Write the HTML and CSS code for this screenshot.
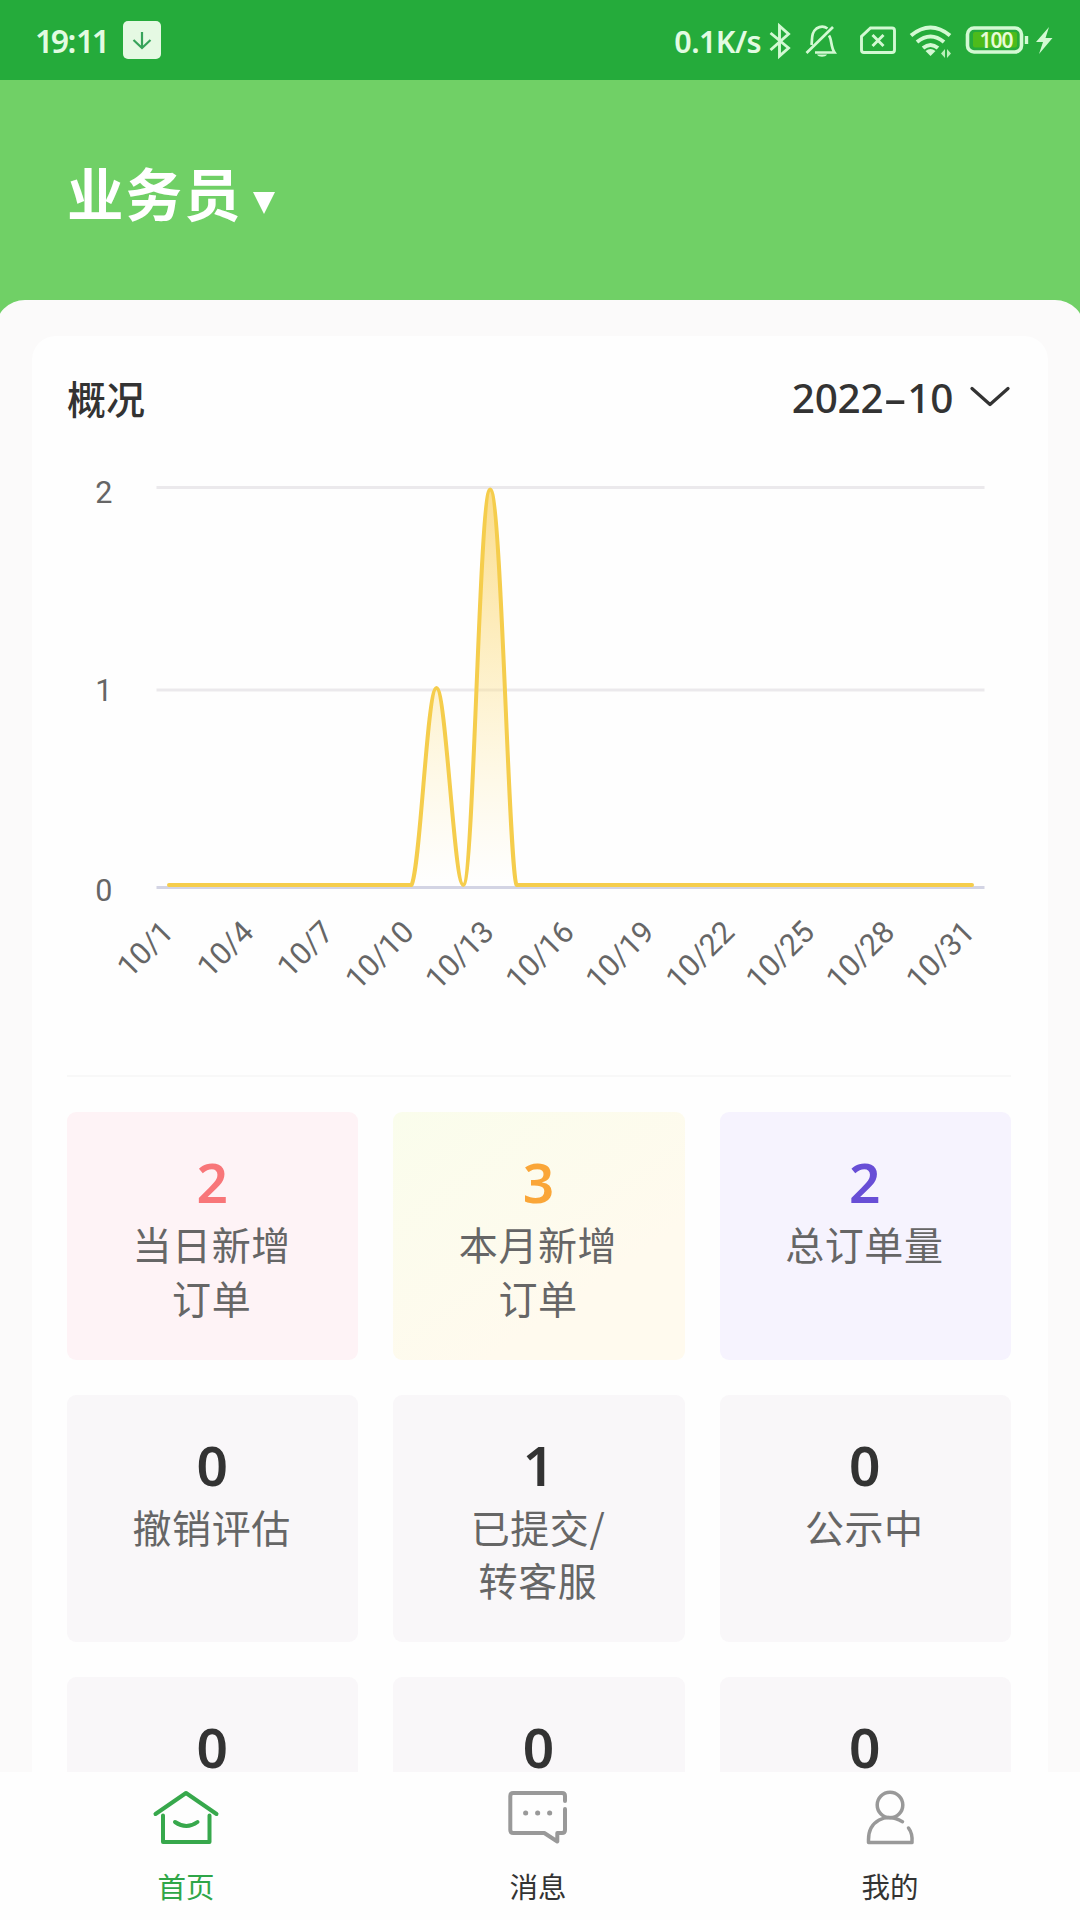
FILE: index.html
```html
<!DOCTYPE html>
<html lang="zh-CN">
<head>
<meta charset="utf-8">
<title>业务员</title>
<link rel="stylesheet" href="styles.css">
</head>
<body>
<div class="status">
  <span class="clock">19<span class="colon">:</span>11</span>
  <svg class="download" width="38" height="38" viewBox="0 0 38 38"><rect width="38" height="38" rx="5" fill="#e5f9e3"/><path d="M19 11v16M10.500 19l8.500 8 8.500-8" fill="none" stroke="#37a35a" stroke-width="2.200"/></svg>
  <span class="speed">0.1K/s</span>
  <svg class="indicators" width="290" height="40" viewBox="768 20 290 40" fill="none" stroke="#d3f9d3" stroke-width="2.900">
    <path d="M770.500 33l18 15-9 8V26l9 8-18 16"/>
    <path d="M829 35.500c3 4 1.500 11 5.500 17H815M811.500 45c1-7-.5-12 5-16.500 4-2.500 8-2.200 11 0M806.500 53L833 27" stroke-width="2.700"/>
    <path d="M817 54.500h10c-1.500 3-8.500 3-10 0z" fill="#d3f9d3" stroke="none"/>
    <path d="M870.500 28H892q2.500 0 2.500 2.500V50q0 2.500-2.500 2.500H864q-2.500 0-2.500-2.500V36.500zM872.500 35l11 11M883.500 35l-11 11"/>
    <path d="M911 35.500q19.500-16 39 0M917 42q13.500-11 27 0M923 48q7.500-6 15 0" stroke-width="4"/>
    <path d="M925.500 51q5-4 10 0l-5 5z" fill="#d3f9d3" stroke="none"/>
    <path d="M945 49v9l-4-4.500zM947 49v9l4-4.500z" fill="#b9efb9" stroke="none"/>
    <rect x="973" y="32" width="44" height="15.500" rx="2" fill="#4dbb1b" stroke="none"/>
    <rect x="967.500" y="28" width="54" height="24" rx="6.500" stroke-width="3.600"/>
    <path d="M1026.500 36v8" stroke-width="3.400"/>
    <text class="charge" x="996" y="47.500" text-anchor="middle">100</text>
    <path d="M1049 27l-13 15h7l-4 12 13.500-16h-7z" fill="#d3f9d3" stroke="none"/>
  </svg>
</div>
<header class="header">
  <h1 class="role">业务员</h1>
  <svg class="caret" width="22" height="22" viewBox="0 0 22 22"><path d="M0 0h22L11 22z" fill="#fff"/></svg>
</header>
<main class="sheet">
  <section class="card">
    <div class="card-head">
      <h2 class="title">概况</h2>
      <div class="month"><span>2022<span class="dash">-</span>10</span>
        <svg width="40" height="22" viewBox="0 0 40 22"><path d="M2 2.500l18 16 18-16" fill="none" stroke="#333" stroke-width="3.200" stroke-linecap="round" stroke-linejoin="round"/></svg>
      </div>
    </div>
    <svg class="chart" width="945" height="630" viewBox="67 445 945 630">
      <defs><linearGradient id="fill" gradientUnits="userSpaceOnUse" x1="0" y1="488" x2="0" y2="885"><stop offset="0" stop-color="#fad164" stop-opacity=".75"/><stop offset=".5" stop-color="#fddf85" stop-opacity=".4"/><stop offset="1" stop-color="#ffeda8" stop-opacity="0"/></linearGradient></defs>
      <path d="M156.500 487.500H984.500M156.500 690H984.500" stroke="#ebe9ec" stroke-width="3"/>
      <path d="M156.500 887.500H984.500" stroke="#d3d4e4" stroke-width="3"/>
      <path d="M411.500 885C420.500 868 427 688 436.500 688S454 885 463.200 885C474 885 479 489.500 490.200 489.500S508.500 868 516.500 885z" fill="url(#fill)"/>
      <path d="M169 885H411.500C420.500 868 427 688 436.500 688S454 885 463.200 885C474 885 479 489.500 490.200 489.500S508.500 868 516.500 885H972" fill="none" stroke="#f5cd4c" stroke-width="4" stroke-linecap="round" stroke-linejoin="round"/>
      <g class="axis">
        <g text-anchor="end"><text x="112.500" y="503">2</text><text x="112.500" y="700.500">1</text><text x="112.500" y="900.500">0</text></g>
        <g text-anchor="end">
          <text transform="translate(167.400 926) rotate(-45)" y="11">10/1</text>
          <text transform="translate(247.500 926) rotate(-45)" y="11">10/4</text>
          <text transform="translate(327.600 926) rotate(-45)" y="11">10/7</text>
          <text transform="translate(407.800 926) rotate(-45)" y="11">10/10</text>
          <text transform="translate(487.900 926) rotate(-45)" y="11">10/13</text>
          <text transform="translate(568 926) rotate(-45)" y="11">10/16</text>
          <text transform="translate(648.100 926) rotate(-45)" y="11">10/19</text>
          <text transform="translate(728.300 926) rotate(-45)" y="11">10/22</text>
          <text transform="translate(808.400 926) rotate(-45)" y="11">10/25</text>
          <text transform="translate(888.500 926) rotate(-45)" y="11">10/28</text>
          <text transform="translate(968.600 926) rotate(-45)" y="11">10/31</text>
        </g>
      </g>
    </svg>
    <div class="tiles">
      <div class="tile pink"><b>2</b><p>当日新增<br>订单</p></div>
      <div class="tile yellow"><b>3</b><p>本月新增<br>订单</p></div>
      <div class="tile purple"><b>2</b><p>总订单量</p></div>
      <div class="tile"><b>0</b><p>撤销评估</p></div>
      <div class="tile"><b>1</b><p>已提交/<br>转客服</p></div>
      <div class="tile"><b>0</b><p>公示中</p></div>
      <div class="tile"><b>0</b></div>
      <div class="tile"><b>0</b></div>
      <div class="tile"><b>0</b></div>
    </div>
  </section>
</main>
<nav class="tabs">
  <a class="tab active"><svg width="70" height="56" viewBox="151 1790 70 56"><path d="M155.500 1814L186 1793l30.500 21M163 1815.500V1842h46.500v-26.500M175 1822q11.500 8 22.500 0"/></svg><span>首页</span></a>
  <a class="tab"><svg width="70" height="56" viewBox="502.700 1790 70 56"><path d="M564.700 1801v-5q0-3-3-3H513q-3 0-3 3v34q0 3 3 3h31l13 8.500V1833h4.700q3 0 3-3v-21"/><path class="dots" d="M525.300 1813h.1M537.300 1813h.1M549.300 1813h.1"/></svg><span>消息</span></a>
  <a class="tab"><svg width="70" height="56" viewBox="855 1790 70 56"><g class="thin"><circle cx="890" cy="1805" r="12.800"/><path d="M902.500 1821.700c-17-10-34-.7-34 18v2.800h43.500c.5-6 0-10-3.500-14.500"/></g></svg><span>我的</span></a>
</nav>
</body>
</html>
```
FILE: styles.css
```css
* { box-sizing: border-box; margin: 0; padding: 0; }
body {
  width: 1080px; height: 1920px; overflow: hidden;
  display: flex; flex-direction: column;
  background: #70d066; color: #333;
  font-family: "Noto Sans", "Noto Sans CJK SC", sans-serif;
}
.status {
  height: 80px; flex: none; display: flex; align-items: center;
  padding: 0 22px 1px 35px; background: #25ab3b; color: #e2fbe2;
}
.clock { width: 88px; font-size: 32px; font-weight: 600; letter-spacing: -2.500px; line-height: 40px; padding-top: 2px; white-space: nowrap; }
.colon { margin: 0 2px 0 1px; }
.download { flex: none; }
.speed { margin-left: auto; font-size: 30.500px; font-weight: 600; line-height: 40px; letter-spacing: -.6px; padding-top: 2px; margin-right: 7px; }
.indicators { flex: none; }
.charge { font-size: 21px; font-weight: 600; fill: #e6fbd8; stroke: none; letter-spacing: -1px; }
.header { height: 220px; flex: none; display: flex; padding: 74px 0 0 67px; }
.role { font: bold 56.500px/74px "Noto Sans CJK SC", sans-serif; letter-spacing: 2px; color: #fff; }
.caret { margin: 38px 0 0 10px; }
.sheet {
  flex: 1; min-height: 0; overflow: hidden; margin: 0 -5px;
  padding: 36px 37px 0; border-radius: 30px 30px 0 0; background: #fbfafa;
}
.card { background: #fefefe; border-radius: 24px 24px 0 0; padding: 0 36px 0 35px; }
.card-head { height: 109px; display: flex; justify-content: space-between; padding-top: 34px; }
.title { font: 500 39px/54px "Noto Sans CJK SC", sans-serif; }
.month { display: flex; align-items: center; gap: 17px; height: 54px; font-size: 40.500px; font-weight: 500; line-height: 54px; padding-right: 2px; letter-spacing: -.3px; }
.month > span { padding-top: 2px; }
.month svg { margin-bottom: 1px; }
.dash { display: inline-block; width: 24px; text-align: center; transform: scaleX(1.800); }
.chart { display: block; }
.axis { font-family: Roboto, sans-serif; font-size: 30.500px; fill: #666; }
.tiles {
  display: grid; grid-template-columns: repeat(3, 1fr); grid-auto-rows: 247.500px; gap: 35px;
  border-top: 2px solid #f8f8f8; padding-top: 35px; margin-right: 1px;
}
.tile { background: #f9f7f9; border-radius: 9px; padding-top: 35px; text-align: center; }
.tile b { display: block; font-size: 55px; line-height: 70px; font-weight: 600; margin-left: -1px; }
.tile p { font: 39px/53.500px "Noto Sans CJK SC", sans-serif; letter-spacing: .6px; color: #666; margin-left: -2px; }
.pink { background: #fef3f6; }
.pink b { color: #f87679; }
.yellow { background: linear-gradient(145deg, #fafdec, #fffaee 70%); }
.yellow b { color: #faa638; }
.purple { background: #f6f3fe; }
.purple b { color: #684ed6; }
.tabs { height: 148px; flex: none; display: flex; background: #fefefe; padding: 18px 14px 0 10px; }
.tab { flex: 1; display: flex; flex-direction: column; align-items: center; }
.tab svg { display: block; fill: none; stroke: #999; stroke-width: 4; stroke-linecap: round; stroke-linejoin: round; }
.tab span { font: 28.500px/40px "Noto Sans CJK SC", sans-serif; margin-top: 20px; }
.active { color: #2fa648; }
.tab.active svg { stroke: #37a84c; }
.tab .dots { stroke-width: 5; }
.thin { stroke-width: 3.500; }
```
